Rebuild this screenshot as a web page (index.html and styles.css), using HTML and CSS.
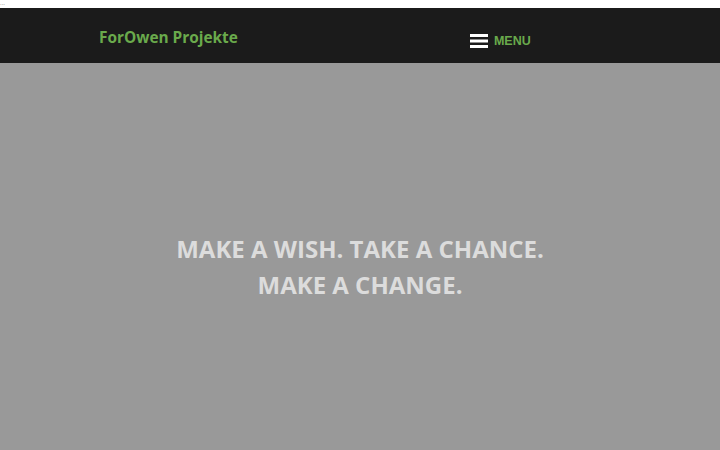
FILE: index.html
```html
<!DOCTYPE html>
<html lang="de">
<head>
  <meta charset="UTF-8">
  <meta name="viewport" content="width=device-width, initial-scale=1.0">
  <title>ForOwen Projekte</title>
  <link rel="stylesheet" href="styles.css">
</head>
<body>
  <div class="skip">...</div>
  <header class="site-header">
    <div class="header-inner">
      <a class="site-title" href="#">ForOwen Projekte</a>
      <a class="menu-toggle" href="#">
        <svg class="menu-icon" width="18" height="14" viewBox="0 0 18 14">
          <rect x="0" y="0" width="18" height="3" fill="#fff"/>
          <rect x="0" y="5.5" width="18" height="3" fill="#fff"/>
          <rect x="0" y="11" width="18" height="3" fill="#fff"/>
        </svg>
        <span>MENU</span>
      </a>
    </div>
  </header>
  <section class="hero">
    <h1 class="hero-title">MAKE A WISH. TAKE A CHANCE.<br>MAKE A CHANGE.</h1>
  </section>
</body>
</html>
```

FILE: styles.css
```css
html, body {
  margin: 0;
  padding: 0;
}
body {
  font-family: "Open Sans", "DejaVu Sans", sans-serif;
  background: #999999;
}
.skip {
  background: #fff;
  height: 8px;
  font-size: 6px;
  line-height: 6px;
  color: #666;
  font-family: "Liberation Sans", sans-serif;
  overflow: hidden;
}
.site-header {
  background: #1b1b1b;
  height: 55px;
}
.header-inner {
  display: flex;
  align-items: center;
  height: 100%;
  padding-left: 99px;
}
.site-title {
  color: #6aaa4c;
  font-weight: 700;
  font-size: 15.4px;
  text-decoration: none;
  margin-top: 3px;
}
.menu-toggle {
  display: flex;
  align-items: center;
  gap: 6px;
  margin-left: 232px;
  margin-top: 10px;
  text-decoration: none;
  color: #6aaa4c;
  font-family: "Liberation Sans", Arial, sans-serif;
  font-weight: 700;
  font-size: 12.5px;
}
.hero {
  height: 387px;
  display: flex;
  align-items: center;
  justify-content: center;
}
.hero-title {
  margin: 20px 0 0;
  text-align: center;
  color: #dcdcdc;
  font-size: 24px;
  line-height: 36px;
  font-weight: 700;
}
```
